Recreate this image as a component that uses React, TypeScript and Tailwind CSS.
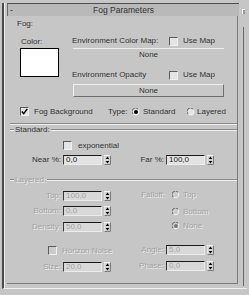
import React from 'react';

const Check = ({ checked = false, disabled = false }: { checked?: boolean; disabled?: boolean }) => (
  <span
    className={`flex h-[9px] w-[9px] shrink-0 items-center justify-center border border-t-[#5c5c5c] border-l-[#5c5c5c] border-b-[#f0f0f0] border-r-[#f0f0f0] ${
      disabled ? 'bg-[#cbcbcb]' : 'bg-[#e4e4e4]'
    }`}
  >
    {checked && (
      <svg width="7" height="7" viewBox="0 0 7 7">
        <path d="M0.8 3.4 L2.7 5.6 L6.3 0.9" stroke="#000" strokeWidth="1.5" fill="none" />
      </svg>
    )}
  </span>
);

const Radio = ({ checked = false, disabled = false }: { checked?: boolean; disabled?: boolean }) => (
  <svg width="8" height="8" viewBox="0 0 8 8" className="shrink-0">
    <circle cx="4" cy="4" r="3.5" fill={disabled ? '#cdcdcd' : '#e4e4e4'} />
    <path d="M1 6 A3.5 3.5 0 0 1 6 1" stroke="#6a6a6a" strokeWidth="1" fill="none" />
    <path d="M6.5 2 A3.5 3.5 0 0 1 2 6.6" stroke="#f2f2f2" strokeWidth="1" fill="none" />
    {checked && <circle cx="4" cy="4" r="2" fill={disabled ? '#7a7a7a' : '#000'} />}
  </svg>
);

const Arrows = () => (
  <svg width="7" height="10" viewBox="0 0 7 10" className="ml-[2px] shrink-0">
    <rect x="0" y="0" width="7" height="10" fill="#d2d2d2" />
    <path d="M0 9.5 V0.5 H6.5" stroke="#f4f4f4" fill="none" />
    <path d="M0.5 9.5 H6.5 V0.5" stroke="#7a7a7a" fill="none" />
    <path d="M3.5 1.6 L5.3 4 H1.7 Z" fill="#000" />
    <path d="M1.7 6 H5.3 L3.5 8.4 Z" fill="#000" />
  </svg>
);

const Spinner = ({ value, disabled = false }: { value: string; disabled?: boolean }) => (
  <div className="flex items-center">
    <div
      className={`h-[10px] w-[39px] border border-t-[#1a1a1a] border-l-[#3a3a3a] border-b-[#ececec] border-r-[#ececec] pl-[2px] text-[8px] leading-[8px] ${
        disabled ? 'bg-[#d8d8d8] text-[#a4a4a4]' : 'bg-[#e2e2e2] text-[#222]'
      }`}
    >
      {value}
    </div>
    <Arrows />
  </div>
);

const dim = 'text-[#a2a2a2] [text-shadow:1px_1px_0_#ececec]';

const GroupLine = ({ label, disabled = false }: { label: string; disabled?: boolean }) => (
  <div className="ml-[3px] flex h-[10px] items-center">
    <div className="h-[2px] w-[4px] border-t border-b border-t-[#8a8a8a] border-b-[#eeeeee]" />
    <span className={`px-[1px] leading-[10px] ${disabled ? dim : ''}`}>{label}</span>
    <div className="h-[2px] flex-1 border-t border-b border-t-[#8a8a8a] border-b-[#eeeeee]" />
  </div>
);

export default function App() {
  return (
    <div
      className="h-[295px] w-[249px] overflow-hidden bg-[#c6c6c6] pt-[3px] pl-[2px] text-[8px] leading-[10px] text-[#333]"
      style={{ fontFamily: '"Liberation Sans", Arial, sans-serif' }}
    >
      <div className="flex h-[286px] w-[245px] border-l-2 border-b border-l-[#4a4a4a] border-b-[#f0f0f0]">
        <div className="flex border-l border-l-[#ececec] pl-[2px]">
          <div className="flex w-[232px] flex-col">
            {/* title bar */}
            <div className="grid h-[13px] grid-cols-[12px_1fr_12px] items-center border-t border-l border-t-[#505050] border-l-[#6a6a6a] bg-[#b9b9b9]">
              <span className="pl-[2px] text-[9px] leading-[10px]">-</span>
              <span className="text-center text-[8.5px]">Fog Parameters</span>
              <span />
            </div>

            <div className="flex h-[268px] w-[231px] flex-col border-r border-b border-r-[#7c7c7c] border-b-[#7c7c7c]">
              {/* Fog */}
              <div className="flex h-[107px] flex-col">
                <div className="mt-[3px] ml-[10px]">Fog:</div>
                <div className="flex">
                  <div className="ml-[13px] flex w-[52px] flex-col">
                    <div className="mt-[8px] ml-[1px]">Color:</div>
                    <div className="mt-[1px] h-[29px] w-[39px] border border-black bg-white" />
                  </div>
                  <div className="flex w-[152px] flex-col">
                    <div className="mt-[7px] flex h-[10px] items-center">
                      <span className="w-[97px]">Environment Color Map:</span>
                      <Check />
                      <span className="ml-[5px]">Use Map</span>
                    </div>
                    <div className="mt-[2px] ml-[1px] flex h-[12px] w-[151px] items-center justify-center border-t border-t-[#ececec]">
                      None
                    </div>
                    <div className="mt-[10px] flex h-[10px] items-center">
                      <span className="w-[97px]">Environment Opacity</span>
                      <Check />
                      <span className="ml-[5px]">Use Map</span>
                    </div>
                    <div className="mt-[4px] ml-[1px] flex h-[13px] w-[151px] items-center justify-center border border-t-[#f0f0f0] border-l-[#f0f0f0] border-b-[#6e6e6e] border-r-[#6e6e6e] bg-[#c8c8c8]">
                      None
                    </div>
                  </div>
                </div>
                <div className="mt-[10px] ml-[13px] flex h-[9px] items-center">
                  <Check checked />
                  <span className="ml-[5px] w-[74px]">Fog Background</span>
                  <span className="w-[24px]">Type:</span>
                  <Radio checked />
                  <span className="ml-[3px] w-[44px]">Standard</span>
                  <Radio />
                  <span className="ml-[2px]">Layered</span>
                </div>
              </div>
              <div className="ml-[3px] h-[2px] border-t border-b border-t-[#8a8a8a] border-b-[#eeeeee]" />

              {/* Standard */}
              <GroupLine label="Standard:" />
              <div className="mt-[6px] ml-[56px] flex h-[9px] items-center">
                <Check />
                <span className="ml-[6px]">exponential</span>
              </div>
              <div className="mt-[5px] flex h-[10px] items-center">
                <span className="w-[55px] pr-[1px] text-right">Near %:</span>
                <div className="ml-[1px]">
                  <Spinner value="0,0" />
                </div>
                <span className="w-[54px] pr-[1px] text-right">Far %:</span>
                <div className="ml-[1px]">
                  <Spinner value="100,0" />
                </div>
              </div>

              {/* Layered */}
              <div className="mt-[10px]">
                <GroupLine label="Layered:" disabled />
              </div>
              <div className="flex">
                <div className="flex w-[104px] flex-col">
                  <div className="mt-[6px] flex h-[10px] items-center">
                    <span className={`w-[55px] pr-[1px] text-right ${dim}`}>Top:</span>
                    <div className="ml-[1px]"><Spinner value="100,0" disabled /></div>
                  </div>
                  <div className="mt-[5px] flex h-[10px] items-center">
                    <span className={`w-[55px] pr-[1px] text-right ${dim}`}>Bottom:</span>
                    <div className="ml-[1px]"><Spinner value="0,0" disabled /></div>
                  </div>
                  <div className="mt-[6px] flex h-[10px] items-center">
                    <span className={`w-[55px] pr-[1px] text-right ${dim}`}>Density:</span>
                    <div className="ml-[1px]"><Spinner value="50,0" disabled /></div>
                  </div>
                  <div className="mt-[14px] ml-[41px] flex h-[9px] items-center">
                    <Check disabled />
                    <span className={`ml-[5px] whitespace-nowrap ${dim}`}>Horizon Noise</span>
                  </div>
                  <div className="mt-[7px] flex h-[10px] items-center">
                    <span className={`w-[55px] pr-[1px] text-right ${dim}`}>Size:</span>
                    <div className="ml-[1px]"><Spinner value="20,0" disabled /></div>
                  </div>
                </div>
                <div className="flex flex-1 flex-col">
                  <div className="mt-[5px] flex h-[10px] items-center">
                    <span className={`w-[54px] text-right ${dim}`}>Falloff:</span>
                    <span className="ml-[7px]"><Radio disabled /></span>
                    <span className={`ml-[3px] ${dim}`}>Top</span>
                  </div>
                  <div className="mt-[7px] ml-[61px] flex h-[10px] items-center">
                    <Radio disabled />
                    <span className={`ml-[3px] ${dim}`}>Bottom</span>
                  </div>
                  <div className="mt-[4px] ml-[61px] flex h-[10px] items-center">
                    <Radio checked disabled />
                    <span className={`ml-[3px] ${dim}`}>None</span>
                  </div>
                  <div className="mt-[14px] flex h-[10px] items-center">
                    <span className={`w-[54px] pr-[1px] text-right ${dim}`}>Angle:</span>
                    <div className="ml-[1px]"><Spinner value="5,0" disabled /></div>
                  </div>
                  <div className="mt-[6px] flex h-[10px] items-center">
                    <span className={`w-[54px] pr-[1px] text-right ${dim}`}>Phase:</span>
                    <div className="ml-[1px]"><Spinner value="0,0" disabled /></div>
                  </div>
                </div>
              </div>
            </div>
          </div>
        </div>

        {/* scrollbar */}
        <div className="flex flex-1 flex-col items-center">
          <div className="mt-[6px] h-[5px] w-[3px] border-t border-l border-t-white border-l-white bg-[#9a9a9a]" />
          <div className="mt-[13px] mb-[2px] w-px flex-1 bg-[#6a6a6a]" />
        </div>
      </div>
    </div>
  );
}
